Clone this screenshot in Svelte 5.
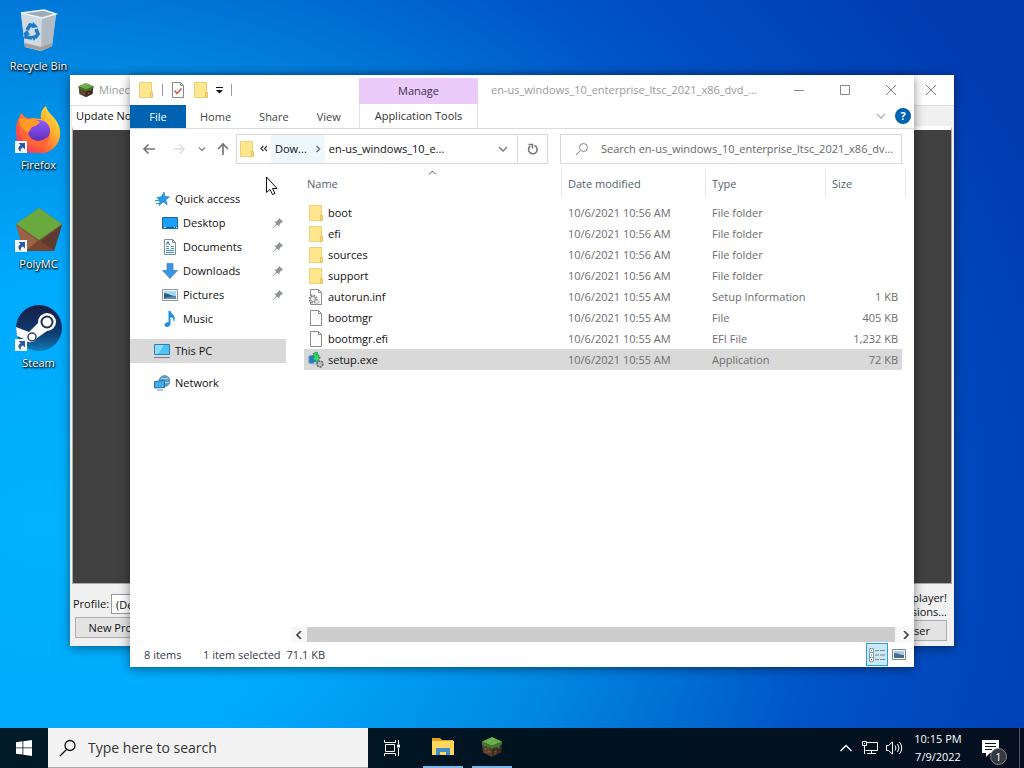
<script>
  const shortcuts = [
    { name: "Recycle Bin", icon: "bin" },
    { name: "Firefox", icon: "firefox", link: true },
    { name: "PolyMC", icon: "polymc", link: true },
    { name: "Steam", icon: "steam", link: true }
  ];

  const quickAccess = [
    { name: "Desktop", icon: "desktop", pinned: true },
    { name: "Documents", icon: "documents", pinned: true },
    { name: "Downloads", icon: "downloads", pinned: true },
    { name: "Pictures", icon: "pictures", pinned: true },
    { name: "Music", icon: "music" }
  ];

  const files = [
    { name: "boot", icon: "folder", date: "10/6/2021 10:56 AM", type: "File folder", size: "" },
    { name: "efi", icon: "folder", date: "10/6/2021 10:56 AM", type: "File folder", size: "" },
    { name: "sources", icon: "folder", date: "10/6/2021 10:56 AM", type: "File folder", size: "" },
    { name: "support", icon: "folder", date: "10/6/2021 10:56 AM", type: "File folder", size: "" },
    { name: "autorun.inf", icon: "inf", date: "10/6/2021 10:55 AM", type: "Setup Information", size: "1 KB" },
    { name: "bootmgr", icon: "file", date: "10/6/2021 10:55 AM", type: "File", size: "405 KB" },
    { name: "bootmgr.efi", icon: "file", date: "10/6/2021 10:55 AM", type: "EFI File", size: "1,232 KB" },
    { name: "setup.exe", icon: "setup", date: "10/6/2021 10:55 AM", type: "Application", size: "72 KB" }
  ];

  let selected = $state("setup.exe");
</script>

{#snippet icon(name)}
  {#if name === "folder"}
    <svg width="16" height="18" viewBox="0 0 16 18">
      <path d="M1.500 1.500h12v15h-12z" fill="#ffe68f" stroke="#efcf74" />
      <path d="M12.500 11.500h2v5h-2z" fill="#f8dc7d" stroke="#e5c25c" />
    </svg>
  {:else if name === "file" || name === "inf"}
    <svg width="16" height="18" viewBox="0 0 16 18">
      <path d="M2.500 1.500h8l3 3v12h-11z" fill="#fdfdfd" stroke="#8c8c8c" />
      <path d="M10.500 1.500v3h3" fill="none" stroke="#8c8c8c" />
      {#if name === "inf"}
        <circle cx="5" cy="11" r="3.500" fill="#e3e3e3" stroke="#888" stroke-width="2" stroke-dasharray="1.600 1.150" />
        <circle cx="5" cy="11" r="2.500" fill="#eee" stroke="#999" />
        <circle cx="9" cy="14" r="2" fill="#eee" stroke="#999" stroke-dasharray="1.500 .6" />
      {/if}
    </svg>
  {:else if name === "setup"}
    <svg width="16" height="18" viewBox="0 0 16 18">
      <path d="M1 5l9-1v9l-9-1z" fill="#2878c8" stroke="#5c93bd" />
      <path d="M4 14h8l-2-3H6z" fill="#b9c5cd" />
      <circle cx="12" cy="13" r="3" fill="#bbb" stroke="#666" stroke-width="1.500" stroke-dasharray="2 1" />
      <path d="M5 2.500L9 1l1 1-1.500 1.500L11 4v2.500h1.500L8.500 11 4 7l2-.5V4z" fill="#35d46c" stroke="#128a47" stroke-width=".7" />
    </svg>
  {:else if name === "check"}
    <svg width="14" height="18" viewBox="0 0 14 18">
      <path d="M1.500 1.500h8l3 3v12h-11z" fill="#fff" stroke="#888" />
      <path d="M9.500 1.500v3h3" fill="none" stroke="#888" />
      <path d="M3.500 9.500l2.500 3 4.500-5" fill="none" stroke="#d9604c" stroke-width="1.700" />
    </svg>
  {:else if name === "star"}
    <svg width="16" height="16" viewBox="0 0 16 16">
      <path d="M10 1l.9 4.300L15.500 6l-3.800 2.700 1.500 5-4-2.700L5 14.500l.8-4.700L3 6.500l4.300-.8z" fill="#2698e8" stroke="#1b78bd" stroke-width=".6" />
      <path d="M1 9.500h5M2 12.500h3" stroke="#2698e8" />
    </svg>
  {:else if name === "desktop"}
    <svg width="16" height="16" viewBox="0 0 16 16">
      <path d="M.5 2.500h15v11H.5z" fill="#18a0f8" stroke="#1769a6" />
      <path d="M1 12.500h14" stroke="#0b5c9e" />
      <path d="M2 12.500h2m8 0h1m1 0h1" stroke="#fff" />
    </svg>
  {:else if name === "documents"}
    <svg width="16" height="16" viewBox="0 0 16 16">
      <path d="M2.500.5h8l3 3v12h-11z" fill="#fff" stroke="#7d8a94" />
      <path d="M10.500.5v3h3" fill="none" stroke="#7d8a94" />
      <path d="M4 7.500h3M4 9.500h3M4 11.500h8M4 13.500h8M9 7.500h3M9 9.500h3" stroke="#3b93c8" />
      <path d="M4.500 6l1.500-3.500L7.500 6" fill="none" stroke="#2671a6" />
    </svg>
  {:else if name === "downloads"}
    <svg width="16" height="16" viewBox="0 0 16 16">
      <path d="M5 .5h6v7h4.500L8 15.500.5 7.500H5z" fill="#3d94e0" stroke="#2978bd" stroke-width=".6" />
    </svg>
  {:else if name === "pictures"}
    <svg width="16" height="16" viewBox="0 0 16 16">
      <path d="M.5 2.500h15v11H.5z" fill="#fff" stroke="#8a949c" />
      <path d="M2 4h12v8H2z" fill="#a9d8f5" />
      <path d="M2 6c4 0 6 3 12 3v3H2z" fill="#265c84" />
      <path d="M5 10l9-1v3H2z" fill="#5f8fae" />
    </svg>
  {:else if name === "music"}
    <svg width="16" height="16" viewBox="0 0 16 16">
      <path d="M6.500 0h2c.5 3 5.500 4.500 4 9.500l-1 1.500c.5-3-1-4.500-3-5V13c0 1.500-1.700 3-3.500 3S2.500 15 2.500 13.600s2-2.600 4-2.300z" fill="#1f8fdf" />
    </svg>
  {:else if name === "pc"}
    <svg width="16" height="16" viewBox="0 0 16 16">
      <path d="M.5 1.500h15v10H.5z" fill="#4cc2f5" stroke="#317fa8" />
      <path d="M1 2h9L4 11H1z" fill="#8bdcff" />
      <path d="M0 14.500h16" stroke="#6d7f8b" />
    </svg>
  {:else if name === "network"}
    <svg width="16" height="16" viewBox="0 0 16 16">
      <circle cx="10.500" cy="6" r="5.500" fill="#5d9dc6" stroke="#47789a" stroke-width=".6" />
      <path d="M7 3c3 0 3 2 7 0M11 8c2-2 3 1 4-1" stroke="#b8dcf0" fill="none" />
      <path d="M.5 6.500l10-1v7l-10 .5z" fill="#40aee8" stroke="#26709c" />
      <path d="M3 15h6" stroke="#5492b5" />
    </svg>
  {:else if name === "pin"}
    <svg width="12" height="12" viewBox="0 0 12 12">
      <path d="M7 .8L11.200 5l-1.500.3-2 2-.2 2.200L5.300 7.600.8 11.500.5 11.200l3.900-4.500L2.500 4.500l2.200-.2 2-2z" fill="#8d9499" />
    </svg>
  {:else if name === "grass"}
    <svg width="100%" height="100%" viewBox="0 0 24 24">
      <path d="M1 6l11 5v12L2 18z" fill="#5b3a2b" />
      <path d="M23 6l-11 5v12l10-5z" fill="#3f2a20" />
      <path d="M12 1l11 5-11 5L1 6z" fill="#6aa84a" />
      <path d="M1 6l11 5v3l-2-2-2 2-2-3-2 1-3-3zM23 6l-11 5v3l3-1 2-1 2 1 2-3 2-1z" fill="#3f7a2c" />
      <path d="M4 13h2v2H4zM8 16h2v2H8zM5 17h2v1H5zM15 16h2v2h-2zM19 12h1v2h-1zM14 19h2v1h-2z" fill="#876049" />
      <path d="M8 5h3v1H8zM13 7h3v1h-3zM12 3h2v1h-2z" fill="#8cc569" />
    </svg>
  {:else if name === "close"}
    <svg width="12" height="12" viewBox="0 0 12 12"><path d="M1 1l10 10M11 1L1 11" stroke="#888" /></svg>
  {:else if name === "down"}
    <svg width="10" height="10" viewBox="0 0 10 10"><path d="M1 3l4 4 4-4" fill="none" stroke="currentColor" stroke-width="1.600" /></svg>
  {:else if name === "bin"}
    <svg width="48" height="48" viewBox="0 0 48 48">
      <path d="M6 7l23-3 12 4-4 32-11 5-16-4z" fill="#c9d3dc" />
      <path d="M6 7l21 5 14-4L29 4z" fill="#9daab4" stroke="#eef4f8" stroke-width="1.500" />
      <path d="M6 8l21 5-1 32-16-4z" fill="#d0dae2" />
      <path d="M27 13l14-4-4 31-11 5z" fill="#b0bbc4" />
      <path d="M10 37l16 4 11-4-1 4-10 4-16-4z" fill="#a39e98" />
      <g fill="none" stroke="#1879c8" stroke-width="3.500">
        <path d="M12 24l3-5 5 1M21 23l2 5-3 4M17 32l-6-1v-4" />
      </g>
      <path d="M18 16l5 5-6 1zM22 29l-3 6-3-5zM8 28l4-4 3 5z" fill="#1879c8" />
    </svg>
  {:else if name === "firefox"}
    <svg width="48" height="48" viewBox="0 0 48 48">
      <defs>
        <linearGradient id="flame" x1="1" y1="0" x2="0" y2="1">
          <stop offset="0" stop-color="#fff04a" />
          <stop offset=".35" stop-color="#ffb02e" />
          <stop offset=".65" stop-color="#ff5a38" />
          <stop offset="1" stop-color="#f0268a" />
        </linearGradient>
        <linearGradient id="globe" x1="0" y1="0" x2="0" y2="1">
          <stop offset="0" stop-color="#9059ff" />
          <stop offset="1" stop-color="#5a2fb5" />
        </linearGradient>
      </defs>
      <path d="M4 13l2-5 6 6 5-1 9 1c-1-6 1-10 5-13 1 7 10 11 13 20 5 15-6 28-21 28S0 38 1 25c0-5 1-9 3-12z" fill="url(#flame)" />
      <circle cx="24" cy="26" r="11" fill="url(#globe)" />
      <path d="M5 14c4-3 9-2 11 2 3 0 6 0 7 2-1 3-6 3-7 5 0 3-3 3-3 6 4 9 16 9 22 0 0 8-7 14-15 13C7 41 2 27 5 14z" fill="#ff6535" />
      <path d="M4 14c3-1 6-1 8 0 4 1 9 0 13 3-2 4-7 4-9 6l-3 5C8 25 4 20 4 14z" fill="#ff9a27" />
    </svg>
  {:else if name === "polymc"}
    <svg width="48" height="48" viewBox="0 0 48 48">
      <path d="M24 4L1 20l10 27h28l8-27z" fill="#80513c" />
      <path d="M1 21l22 16-12 10-3-2z" fill="#9a6247" />
      <path d="M47 21L25 37l14 10z" fill="#5e3b2f" />
      <path d="M11 47l13-11 15 11z" fill="#79452f" />
      <path d="M24 4L1 20l23 16 23-16z" fill="#6aa93d" />
    </svg>
  {:else if name === "steam"}
    <svg width="48" height="48" viewBox="0 0 48 48">
      <defs>
        <linearGradient id="steamfill" x1="0" y1="0" x2="0" y2="1">
          <stop offset="0" stop-color="#171f46" />
          <stop offset=".6" stop-color="#0d3b70" />
          <stop offset="1" stop-color="#137bb5" />
        </linearGradient>
      </defs>
      <circle cx="24" cy="25" r="23" fill="url(#steamfill)" />
      <path d="M1 24l13 5 10-10 8 9-10 7c-2 5-10 6-13 1l-7-3z" fill="#fff" />
      <circle cx="32" cy="19" r="9" fill="#fff" />
      <circle cx="32" cy="19" r="5.500" fill="#fff" stroke="#243253" stroke-width="2" />
      <circle cx="17" cy="34" r="4" fill="#fff" stroke="#29416a" stroke-width="1.500" />
    </svg>
  {/if}
{/snippet}

<div class="screen">
  <main class="desktop">
    <div class="shortcuts">
      {#each shortcuts as item}
        <button class="shortcut">
          <span class="shortcut-icon">
            {@render icon(item.icon)}
            {#if item.link}
              <svg class="link" width="12" height="12" viewBox="0 0 12 12">
                <path d="M0 0h12v12H0z" fill="#f4f7fb" />
                <path d="M3.500 2H10v6.500L8 6.500C6 7 5.500 8.500 5.500 11 2.500 8.500 3 5.500 5.700 4.200z" fill="#2c58a5" />
              </svg>
            {/if}
          </span>
          {item.name}
        </button>
      {/each}
    </div>

    <section class="window launcher">
      <header class="launcher-title">
        <span class="cube">{@render icon("grass")}</span>
        <span class="grow">Minecraft Launcher</span>
        <button class="caption" aria-label="Close launcher">{@render icon("close")}</button>
      </header>
      <div class="launcher-tabs"><button>Update Notes</button></div>
      <div class="launcher-page"></div>
      <footer class="launcher-foot">
        <div class="profile">
          <div class="profile-row">
            <label for="profile">Profile:</label>
            <select id="profile"><option>(Default)</option></select>
          </div>
          <button class="classic">New Profile</button>
        </div>
        <div class="player">
          <span>Welcome, player!</span>
          <span>Ready to play versions...</span>
          <button class="classic">Switch User</button>
        </div>
      </footer>
    </section>

    <section class="window explorer">
      <header class="ribbon">
        <div class="quickbar">
          {@render icon("folder")}
          <i class="bar"></i>
          <button aria-label="Properties">{@render icon("check")}</button>
          <button aria-label="New folder">{@render icon("folder")}</button>
          <button class="customize" aria-label="Customize toolbar">
            <svg width="9" height="9" viewBox="0 0 9 9"><path d="M1 2h7v1H1zM1 5h7L4.500 8.500z" fill="#111" /></svg>
          </button>
          <i class="bar"></i>
        </div>
        <div class="manage">Manage</div>
        <div class="titlebar">
          <span class="title">en-us_windows_10_enterprise_ltsc_2021_x86_dvd_...</span>
          <button class="caption" aria-label="Minimize">
            <svg width="12" height="12" viewBox="0 0 12 12"><path d="M1 6.500h10" stroke="#888" /></svg>
          </button>
          <button class="caption" aria-label="Maximize">
            <svg width="12" height="12" viewBox="0 0 12 12"><path d="M1.500 1.500h9v9h-9z" fill="none" stroke="#888" /></svg>
          </button>
          <button class="caption" aria-label="Close">{@render icon("close")}</button>
        </div>
        <nav class="tabs">
          <button class="file">File</button>
          <button>Home</button>
          <button>Share</button>
          <button>View</button>
        </nav>
        <button class="tools">Application Tools</button>
        <div class="help">
          <button class="faint" aria-label="Expand ribbon">{@render icon("down")}</button>
          <button class="question" aria-label="Help">?</button>
        </div>
      </header>

      <div class="navrow">
        <div class="arrows">
          <button aria-label="Back">
            <svg width="14" height="14" viewBox="0 0 14 14"><path d="M13 7H2M6.500 2.500L2 7l4.500 4.500" fill="none" stroke="#777" stroke-width="1.700" /></svg>
          </button>
          <button aria-label="Forward">
            <svg width="14" height="14" viewBox="0 0 14 14"><path d="M1 7h11M7.500 2.500L12 7l-4.500 4.500" fill="none" stroke="#ddd" stroke-width="1.500" /></svg>
          </button>
          <button class="recent" aria-label="Recent locations">
            <svg width="8" height="8" viewBox="0 0 8 8"><path d="M1 2.500l3 3 3-3" fill="none" stroke="#888" stroke-width="1.500" /></svg>
          </button>
          <button aria-label="Up">
            <svg width="14" height="14" viewBox="0 0 14 14"><path d="M7 13V2M2 7l5-5 5 5" fill="none" stroke="#777" stroke-width="1.700" /></svg>
          </button>
        </div>
        <div class="address">
          {@render icon("folder")}
          <svg class="chevrons" width="8" height="8" viewBox="0 0 8 8"><path d="M3.500 1L1 3.500 3.500 6M7 1L4.500 3.500 7 6" fill="none" stroke="#333" stroke-width="1.200" /></svg>
          <button class="crumb parent">Dow...</button>
          <span class="crumb-arrow">
            <svg width="6" height="8" viewBox="0 0 6 8"><path d="M1.500 1l3 3-3 3" fill="none" stroke="#777" stroke-width="1.500" /></svg>
          </span>
          <button class="crumb">en-us_windows_10_e...</button>
          <button class="history" aria-label="Previous locations">{@render icon("down")}</button>
          <button class="refresh" aria-label="Refresh">
            <svg width="12" height="12" viewBox="0 0 12 12">
              <path d="M3.300 3A4.300 4.300 0 1 0 7.500 2.500" fill="none" stroke="#777" stroke-width="1.600" />
              <path d="M1.500 1.500h4V5.500" fill="none" stroke="#777" stroke-width="1.500" />
            </svg>
          </button>
        </div>
        <label class="find">
          <svg width="14" height="14" viewBox="0 0 14 14"><circle cx="8.500" cy="5.500" r="4" fill="none" stroke="#888" /><path d="M5.500 8.500L1 13" stroke="#888" /></svg>
          <input type="text" aria-label="Search folder" placeholder="Search en-us_windows_10_enterprise_ltsc_2021_x86_dv..." />
        </label>
      </div>

      <div class="body">
        <nav class="sidebar">
          <a class="root" href="#quick">{@render icon("star")}<span>Quick access</span></a>
          {#each quickAccess as place}
            <a class="child" href="#{place.icon}">
              {@render icon(place.icon)}
              <span>{place.name}</span>
              {#if place.pinned}{@render icon("pin")}{/if}
            </a>
          {/each}
          <a class="root apart current" href="#pc">{@render icon("pc")}<span>This PC</span></a>
          <a class="root apart" href="#network">{@render icon("network")}<span>Network</span></a>
        </nav>

        <div class="content">
          <div class="list">
            <table>
              <colgroup>
                <col class="c-name" /><col class="c-date" /><col class="c-type" /><col class="c-size" />
              </colgroup>
              <thead>
                <tr>
                  <th>
                    Name
                    <svg class="sort" width="9" height="5" viewBox="0 0 9 5"><path d="M1 4.500L4.500 1 8 4.500" fill="none" stroke="#555" /></svg>
                  </th>
                  <th>Date modified</th>
                  <th>Type</th>
                  <th>Size</th>
                </tr>
              </thead>
              <tbody>
                {#each files as file}
                  <tr class:selected={selected === file.name} onclick={() => (selected = file.name)}>
                    <td><div class="name">{@render icon(file.icon)}{file.name}</div></td>
                    <td>{file.date}</td>
                    <td>{file.type}</td>
                    <td>{file.size}</td>
                  </tr>
                {/each}
              </tbody>
            </table>
          </div>
          <div class="scroll">
            <button aria-label="Scroll left">
              <svg width="8" height="8" viewBox="0 0 8 8"><path d="M6 0L2 4l4 4" fill="none" stroke="#444" stroke-width="1.700" /></svg>
            </button>
            <div class="thumb"></div>
            <button aria-label="Scroll right">
              <svg width="8" height="8" viewBox="0 0 8 8"><path d="M2 0l4 4-4 4" fill="none" stroke="#444" stroke-width="1.700" /></svg>
            </button>
          </div>
        </div>
      </div>

      <footer class="status">
        <span class="count">8 items</span>
        <span>1 item selected</span>
        <span class="grow">71.1 KB</span>
        <button class="view active" aria-label="Details view">
          <svg width="18" height="16" viewBox="0 0 18 16">
            <path d="M1.500 1.500h4v13h-4zM1.500 5.500h4M1.500 10.500h4" fill="#fff" stroke="#8a9aa5" />
            <path d="M3 3.500h1M3 8h1M3 12.500h1" stroke="#2d6f9c" />
            <path d="M7 3.500h4m1 0h5M7 8h4m1 0h5M7 12.500h4m1 0h5" stroke="#7b8a93" />
          </svg>
        </button>
        <button class="view" aria-label="Large icons view">
          <svg width="14" height="12" viewBox="0 0 14 12">
            <path d="M.5.500h13v10H.5z" fill="#fff" stroke="#7b8790" />
            <path d="M2 2h10v6H2z" fill="#a6cdea" />
            <path d="M2 4c4 0 6 2 10 2v3H2z" fill="#4a6d8c" />
          </svg>
        </button>
      </footer>
    </section>

    <svg class="pointer" width="13" height="20" viewBox="0 0 13 20">
      <path d="M1.500 1v15.500l3.500-3.200 2.500 5.200 2.500-1-2.500-5H12z" fill="#fff" stroke="#111" />
    </svg>
  </main>

  <footer class="taskbar">
    <button class="start" aria-label="Start">
      <svg width="16" height="16" viewBox="0 0 16 16"><path d="M0 2.200l6.500-.9v6.200H0zM7.300 1.200L16 0v7.500H7.300zM0 8.300h6.500v6.300L0 13.700zM7.300 8.300H16V16l-8.700-1.200z" fill="#fff" /></svg>
    </button>
    <label class="task-search">
      <svg width="18" height="18" viewBox="0 0 18 18"><circle cx="11" cy="6.500" r="5" fill="none" stroke="#111" stroke-width="1.300" /><path d="M7.500 10.500L1 17" stroke="#111" stroke-width="1.300" /></svg>
      <input type="text" aria-label="Search the computer" placeholder="Type here to search" />
    </label>
    <button class="task-view" aria-label="Task view">
      <svg width="18" height="16" viewBox="0 0 18 16">
        <path d="M2.500 4.500h9v7h-9zM1.500 0v2.500h11V0M1.500 16v-2.500h11V16M15.500 0v4M15.500 8v8" fill="none" stroke="#fff" />
        <path d="M14 4.500h3v3h-3z" fill="#fff" />
      </svg>
    </button>
    <button class="app" aria-label="File Explorer">
      <svg width="22" height="20" viewBox="0 0 22 20">
        <path d="M0 1h8l2 2h11v5H0z" fill="#e89f1f" />
        <path d="M0 4h22v14H0z" fill="#ffd55c" />
        <path d="M4 18v-7h14v7h-4v-3H8v3z" fill="#3e8ec9" />
      </svg>
    </button>
    <button class="app" aria-label="Minecraft Launcher"><span class="cube big">{@render icon("grass")}</span></button>
    <div class="tray">
      <button aria-label="Hidden icons">
        <svg width="14" height="10" viewBox="0 0 14 10"><path d="M1.500 8L7 2.500 12.500 8" fill="none" stroke="#fff" stroke-width="1.300" /></svg>
      </button>
      <button aria-label="Network status">
        <svg width="18" height="16" viewBox="0 0 18 16">
          <path d="M5.500 2.500h11v8h-12M10.500 10.500v3M6 13.500h9M3.500 6v8M1.500 1.500h4v4h-4zM3 3.500h1" fill="none" stroke="#fff" />
        </svg>
      </button>
      <button aria-label="Volume">
        <svg width="18" height="16" viewBox="0 0 18 16">
          <path d="M1.500 5.500h2l4-3.500v12l-4-3.500h-2zM10 5.500q2 2.500 0 5M12.500 4q3 4 0 8M14.500 2q4.500 6 0 12" fill="none" stroke="#fff" />
        </svg>
      </button>
      <div class="clock"><time>10:15 PM</time><time>7/9/2022</time></div>
      <button class="notify" aria-label="Notifications">
        <svg width="18" height="18" viewBox="0 0 18 18">
          <path d="M0 1h17v13h-9l-4 4v-4H0z" fill="#fff" />
          <path d="M3 4.500h11M3 7.500h11M3 10.500h7" stroke="#081019" />
        </svg>
        <span class="badge">1</span>
      </button>
      <button class="peek" aria-label="Show desktop"></button>
    </div>
  </footer>
</div>

<style>
  :global(body) {
    margin: 0;
  }

  .screen {
    display: flex;
    flex-direction: column;
    height: 100vh;
    overflow: hidden;
    font-family: "Open Sans", "Noto Sans", sans-serif;
    font-size: 11px;
    line-height: 16px;
    color: #111;
  }

  button,
  input,
  select {
    font: inherit;
    color: inherit;
    box-sizing: border-box;
  }

  button {
    display: flex;
    align-items: center;
    justify-content: center;
    padding: 0;
    border: 0;
    background: none;
    white-space: nowrap;
  }

  input {
    flex: 1;
    min-width: 0;
    padding: 0;
    border: 0;
    outline: 0;
    background: none;
  }

  input::placeholder {
    color: inherit;
    opacity: 1;
  }

  svg {
    flex: none;
    display: block;
  }

  .grow {
    flex: 1;
  }

  .desktop {
    position: relative;
    flex: 1;
    min-height: 0;
    overflow: hidden;
    background: radial-gradient(ellipse 105% 125% at 4% 72%, #00b2ff 0%, #00a9fc 28%, #0088e2 50%, #0054c6 74%, #003bb2 100%);
  }

  .shortcuts {
    display: flex;
    flex-direction: column;
    width: 77px;
  }

  .shortcut {
    flex-direction: column;
    justify-content: flex-start;
    gap: 4px;
    height: 99px;
    padding-top: 6px;
    color: #fff;
    text-shadow: 0 1px 2px #000, 1px 1px 2px #000;
  }

  .shortcut-icon {
    position: relative;
  }

  .link {
    position: absolute;
    left: 0;
    bottom: 0;
  }

  .window {
    position: absolute;
    display: flex;
    flex-direction: column;
    box-shadow: 0 2px 10px rgba(0, 0, 0, 0.45);
  }

  .launcher {
    left: 70px;
    top: 75px;
    width: 884px;
    height: 571px;
    background: #f0f0f0;
  }

  .launcher-title {
    display: flex;
    align-items: center;
    height: 30px;
    padding-left: 8px;
    gap: 5px;
    background: #fff;
    color: #999;
  }

  .cube {
    width: 16px;
    height: 16px;
  }

  .big {
    width: 22px;
    height: 22px;
  }

  .caption {
    width: 46px;
    height: 29px;
  }

  .launcher-tabs {
    display: flex;
    height: 20px;
    padding-left: 2px;
    border-top: 1px solid #ddd;
  }

  .launcher-tabs button {
    padding: 0 4px;
    background: #fff;
  }

  .launcher-page {
    flex: 1;
    margin: 0 2px;
    border: 1px solid #aaa;
    border-top: 4px solid #fff;
    background: #404040;
  }

  .launcher-foot {
    display: flex;
    justify-content: space-between;
    height: 62px;
  }

  .profile {
    display: flex;
    flex-direction: column;
    gap: 3px;
    width: 290px;
    padding: 10px 3px 0;
  }

  .profile-row {
    display: flex;
    align-items: center;
    gap: 2px;
  }

  .profile-row select {
    flex: 1;
    height: 20px;
    padding: 0;
    border: 1px solid #999;
    background: #fff;
  }

  .classic {
    height: 21px;
    margin-left: 2px;
    border: 1px solid #adadad;
    background: #e3e3e3;
  }

  .profile .classic {
    width: 86px;
  }

  .player {
    display: flex;
    flex-direction: column;
    align-items: flex-end;
    padding: 7px 7px 0;
    line-height: 14px;
  }

  .player .classic {
    width: 250px;
    padding-left: 156px;
    margin-top: 1px;
  }

  .explorer {
    left: 130px;
    top: 75px;
    width: 784px;
    height: 592px;
    background: #fff;
  }

  .ribbon {
    display: grid;
    grid-template-columns: 229px 119px 1fr;
    grid-template-rows: 29px 24px;
    border-bottom: 1px solid #dadbdc;
  }

  .quickbar {
    display: flex;
    align-items: center;
    gap: 8px;
    padding-left: 8px;
  }

  .customize {
    margin: 0 -1px 0 -2px;
  }

  .bar {
    width: 1px;
    height: 12px;
    background: #999;
  }

  .manage {
    margin-top: 3px;
    background: #eacbfa;
    line-height: 26px;
    text-align: center;
    color: #40304a;
  }

  .tools {
    border: solid #e6e1e8;
    border-width: 0 1px;
    color: #333;
  }

  .titlebar {
    display: flex;
    align-items: center;
    padding-left: 13px;
    color: #999;
  }

  .title {
    flex: 1;
    min-width: 0;
    overflow: hidden;
    white-space: nowrap;
  }

  .tabs {
    display: flex;
    padding-top: 1px;
    color: #444;
  }

  .tabs button {
    padding: 0 14px;
  }

  .tabs .file {
    width: 56px;
    background: #0063b1;
    color: #fff;
  }

  .help {
    display: flex;
    align-items: center;
    justify-content: flex-end;
    gap: 9px;
    padding-right: 3px;
  }

  .faint {
    color: #bbb;
  }

  .question {
    width: 16px;
    height: 16px;
    border-radius: 50%;
    background: #0063b1;
    color: #fff;
    font-weight: 700;
  }

  .navrow {
    display: flex;
    align-items: center;
    height: 40px;
    padding-right: 12px;
    box-sizing: border-box;
  }

  .arrows {
    display: flex;
    gap: 16px;
    width: 94px;
    padding-left: 12px;
  }

  .recent {
    margin: 0 -6px 0 -4px;
  }

  .address,
  .find {
    display: flex;
    align-items: center;
    height: 30px;
    box-sizing: border-box;
    border: 1px solid #d9d9d9;
  }

  .address {
    flex: 1;
    padding-left: 2px;
  }

  .chevrons {
    margin: 0 3px 0 5px;
  }

  .crumb {
    height: 28px;
    padding: 0 4px;
  }

  .parent,
  .crumb-arrow {
    background: #eef7fc;
  }

  .crumb-arrow {
    display: flex;
    align-items: center;
    height: 28px;
    padding: 0 4px;
  }

  .history {
    margin-left: auto;
    width: 28px;
    height: 28px;
    color: #888;
  }

  .refresh {
    width: 30px;
    height: 28px;
    border-left: 1px solid #d9d9d9;
  }

  .find {
    flex: 0 1 342px;
    gap: 12px;
    margin-left: 12px;
    padding-left: 14px;
    color: #666;
  }

  .body {
    display: flex;
    flex: 1;
    min-height: 0;
  }

  .sidebar {
    display: flex;
    flex-direction: column;
    width: 156px;
    padding: 18px 5px 0 0;
  }

  .sidebar a {
    display: flex;
    align-items: center;
    height: 24px;
    color: inherit;
    text-decoration: none;
  }

  .sidebar span {
    flex: 1;
    padding-left: 5px;
  }

  .root {
    padding-left: 24px;
  }

  .child {
    padding: 0 2px 0 32px;
  }

  .apart {
    margin-top: 8px;
  }

  .current {
    background: #d9d9d9;
  }

  .content {
    display: flex;
    flex-direction: column;
    flex: 1;
    min-width: 0;
  }

  .list {
    flex: 1;
    padding: 1px 0 0 13px;
  }

  table {
    width: 598px;
    border-collapse: collapse;
    table-layout: fixed;
  }

  .c-name {
    width: 257px;
  }

  .c-date {
    width: 144px;
  }

  .c-type {
    width: 120px;
  }

  .c-size {
    width: 77px;
  }

  th {
    position: relative;
    height: 27px;
    padding: 0 0 0 7px;
    font-weight: 400;
    text-align: left;
    color: #55606e;
  }

  th:first-child {
    padding-left: 3px;
  }

  th + th::before,
  th:last-child::after {
    content: "";
    position: absolute;
    top: 0;
    left: 0;
    width: 1px;
    height: 100%;
    background: #e5e5e5;
  }

  th:last-child::after {
    left: auto;
    right: -4px;
  }

  .sort {
    position: absolute;
    top: 0;
    left: 50%;
    margin-left: -5px;
  }

  tbody::before {
    content: "";
    display: block;
    height: 5px;
  }

  td {
    height: 21px;
    padding: 0 0 0 7px;
    color: #6d6d6d;
    white-space: nowrap;
  }

  td:first-child {
    padding-left: 4px;
    color: #111;
  }

  td:last-child {
    padding-right: 4px;
    text-align: right;
  }

  .name {
    display: flex;
    align-items: center;
    gap: 4px;
  }

  .selected {
    background: #d9d9d9;
  }

  .scroll {
    display: flex;
    height: 15px;
    background: #f7f7f7;
  }

  .scroll button {
    width: 16px;
  }

  .thumb {
    flex: 1;
    margin-right: 3px;
    background: #cdcdcd;
  }

  .status {
    display: flex;
    align-items: center;
    height: 25px;
    padding: 0 5px 0 14px;
    gap: 6px;
    color: #333b4d;
  }

  .count {
    width: 53px;
  }

  .view {
    width: 20px;
    height: 23px;
  }

  .active {
    width: 22px;
    margin-right: -5px;
    border: 1px solid #26a0da;
    background: #cbe8f6;
  }

  .pointer {
    position: absolute;
    left: 265px;
    top: 176px;
  }

  .taskbar {
    display: flex;
    flex: none;
    height: 40px;
    background: linear-gradient(90deg, #001a28, #001420 50%, #050f20);
    color: #fff;
  }

  .start {
    width: 48px;
  }

  .task-search {
    display: flex;
    align-items: center;
    gap: 11px;
    flex: 0 1 320px;
    box-sizing: border-box;
    padding-left: 11px;
    border-bottom: 1px solid #aaa;
    background: #f2f2f2;
    color: #333;
    font-size: 14px;
    line-height: 20px;
  }

  .task-view {
    width: 48px;
    margin-right: 7px;
  }

  .app {
    width: 40px;
    margin-right: 9px;
    border-bottom: 2px solid #76b9ed;
  }

  .tray {
    display: flex;
    align-items: center;
    gap: 6px;
    margin-left: auto;
  }

  .tray button:first-child {
    margin-right: 2px;
  }

  .clock {
    display: flex;
    flex-direction: column;
    width: 54px;
    margin: 0 8px 0 2px;
    line-height: 18px;
    text-align: center;
  }

  .notify {
    position: relative;
    width: 24px;
    height: 24px;
    margin-right: 10px;
  }

  .badge {
    position: absolute;
    right: -4px;
    bottom: -5px;
    width: 15px;
    border: 1px solid #888;
    border-radius: 50%;
    background: #333a42;
    line-height: 15px;
  }

  .tray .peek {
    width: 5px;
    height: 40px;
    border-left: 1px solid #4d5966;
  }
</style>
